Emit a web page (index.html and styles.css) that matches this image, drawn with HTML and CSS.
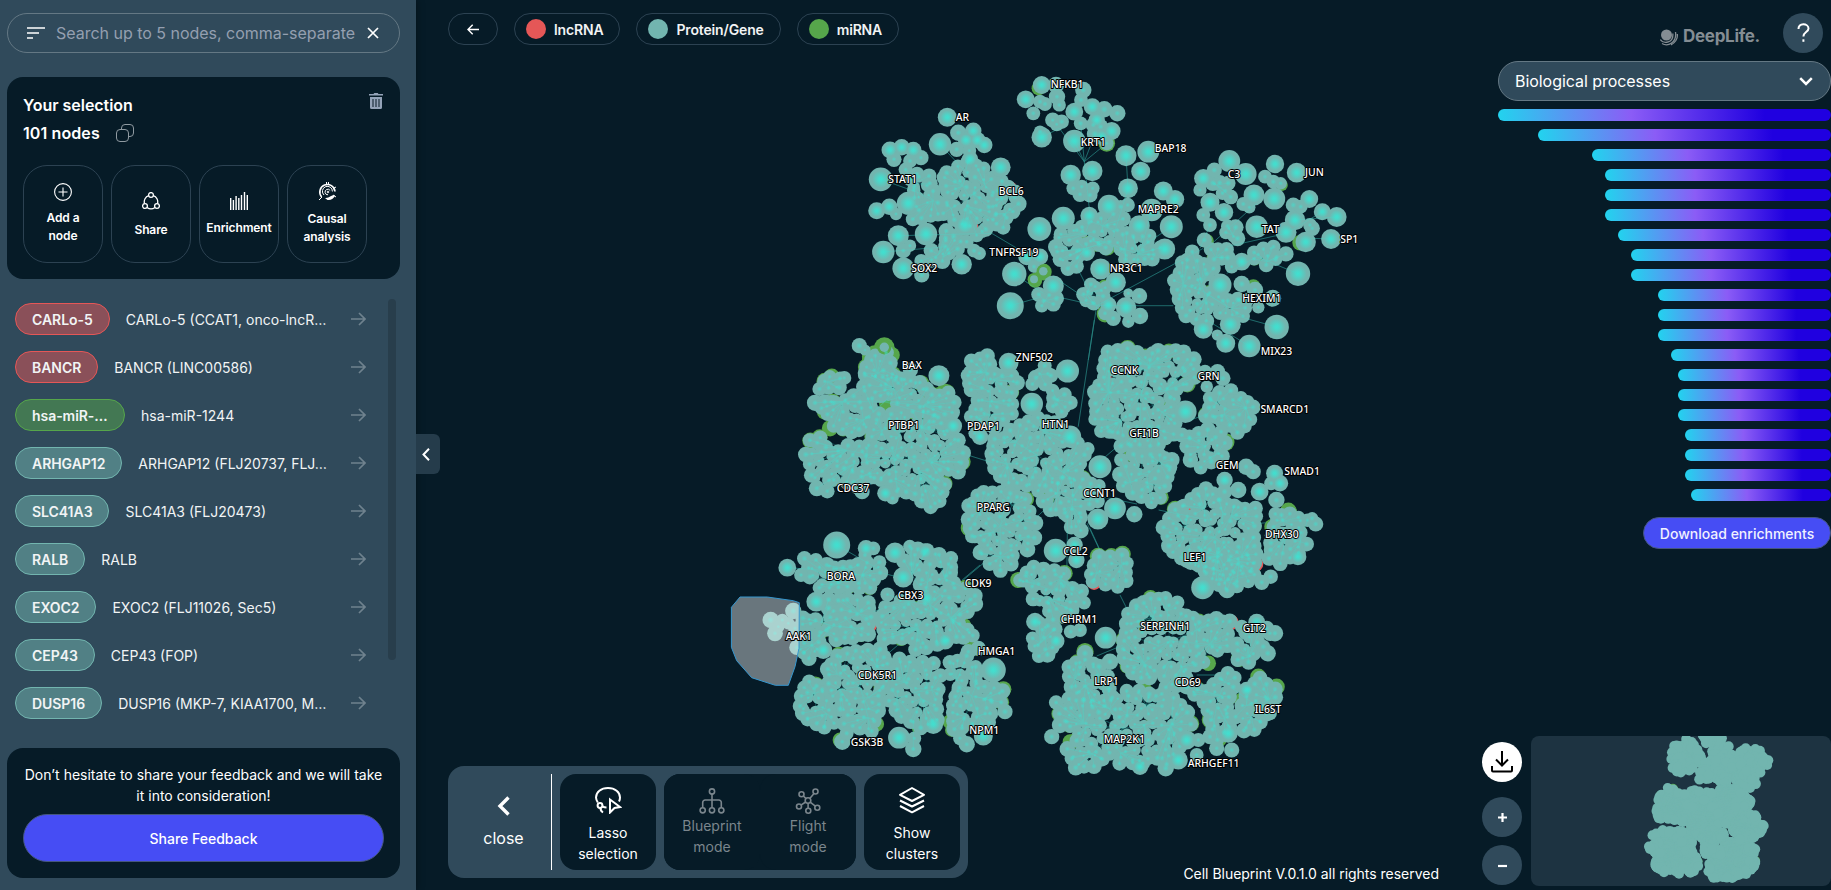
FILE: index.html
```html
<!DOCTYPE html>
<html lang="en">
<head>
<meta charset="utf-8">
<title>Cell Blueprint</title>
<link rel="stylesheet" href="styles.css">
</head>
<body>
<svg class="graph" id="graph" viewBox="0 0 1831 890" width="1831" height="890">
  <defs>
    <radialGradient id="core">
      <stop offset="0" stop-color="#40e0d0"/>
      <stop offset=".25" stop-color="#40e0d0" stop-opacity=".85"/>
      <stop offset="1" stop-color="#40e0d0" stop-opacity="0"/>
    </radialGradient>
  </defs>
</svg>

<div class="app">
  <aside class="sidebar">
    <div class="search">
      <svg class="ic-filter" width="18" height="12" viewBox="0 0 18 12" stroke="#fff" stroke-width="1.3"><path d="M0 1h18M0 6h12M0 11h6"/></svg>
      <span class="search-text">Search up to 5 nodes, comma-separate</span>
      <svg width="12" height="12" viewBox="0 0 12 12" stroke="#fff" stroke-width="1.7"><path d="M1 1l10 10M11 1L1 11"/></svg>
    </div>

    <section class="card selection">
      <div class="sel-head">
        <div>
          <h2>Your selection</h2>
          <div class="count"><h2>101 nodes</h2>
            <svg width="18" height="18" viewBox="0 0 18 18" fill="none" stroke="#8f9aa1"><rect x=".5" y="5.500" width="12" height="12" rx="3.500"/><path d="M5.500 5.500V4a3.500 3.500 0 0 1 3.500-3.500h5A3.500 3.500 0 0 1 17.500 4v5a3.500 3.500 0 0 1-3.500 3.500h-1.500"/></svg>
          </div>
        </div>
        <svg class="trash" width="14" height="16" viewBox="0 0 14 16" fill="#94a3b8"><path d="M0 1h4.500l.8-1h3.400l.8 1H14v1.600H0z"/><path fill-rule="evenodd" d="M1 4h12v10.500a1.500 1.500 0 0 1-1.500 1.500h-9A1.500 1.500 0 0 1 1 14.500zM3.500 6v8h1V6zM6.500 6v8h1V6zM9.500 6v8h1V6z"/></svg>
      </div>
      <div class="actions">
        <button class="action"><svg width="18" height="18" viewBox="0 0 18 18" fill="none" stroke="#fff" stroke-width="1.100"><circle cx="9" cy="9" r="8.400"/><path d="M9 4.500v9M4.500 9h9"/></svg><span>Add a<br>node</span></button>
        <button class="action share"><svg width="18" height="18" viewBox="0 0 18 18" fill="none" stroke="#fff" stroke-width="1.300"><circle cx="9" cy="3" r="2.400"/><circle cx="3" cy="14" r="2.400"/><circle cx="15" cy="14" r="2.400"/><path d="M6.700 3.600A6.500 6.500 0 0 0 2.500 11.500M11.300 3.600a6.500 6.500 0 0 1 4.200 7.900M5 15.500a7 7 0 0 0 8 0"/></svg><span>Share</span></button>
        <button class="action enrich"><svg width="18" height="18" viewBox="0 0 18 18" stroke="#fff" stroke-width="1.400"><path d="M.7 18V6M3.400 18V8M6.100 18V4M8.800 18V6M11.500 18V3M14.500 18V0M17.300 18V3"/></svg><span>Enrichment</span></button>
        <button class="action causal"><svg width="19" height="19" viewBox="0 0 19 19" fill="none" stroke="#fff" stroke-width="1"><path d="M3.600 15A7.600 7.600 0 1 1 17 9.500" stroke-width="1.600"/><path d="M6 13a5 5 0 1 1 8.400-3.500M10 12.800a2.800 2.800 0 1 1 2.200-4.300M8.500 0v2M10.500 0v2M1 18l3-3M16 6l2-1M15 13l3 2"/><circle cx="10" cy="10" r=".8"/><path d="M7 16c5 .5 6-3.500 10-2.500-1 3-4 5-7.500 4.500z" fill="#fff" stroke="none"/></svg><span>Causal<br>analysis</span></button>
      </div>
    </section>

    <div class="list">
      <ul class="rows" id="rows"></ul>
      <div class="scrollbar"></div>
    </div>

    <section class="card feedback">
      <p>Don’t hesitate to share your feedback and we will take it into consideration!</p>
      <button class="primary">Share Feedback</button>
    </section>
    <button class="collapse"><svg width="8" height="13" viewBox="0 0 8 13" fill="none" stroke="#fff" stroke-width="2"><path d="M7 .8L1.500 6.500 7 12.200"/></svg></button>
  </aside>

  <main class="stage">
    <div class="left-col">
      <div class="legend">
        <button class="chip back"><svg width="12" height="11" viewBox="0 0 12 11" fill="none" stroke="#fff" stroke-width="1.400"><path d="M12 5.500H1M5.700.8L1 5.500l4.700 4.700"/></svg></button>
        <div class="chip"><i class="dot red"></i>lncRNA</div>
        <div class="chip"><i class="dot teal"></i>Protein/Gene</div>
        <div class="chip"><i class="dot green"></i>miRNA</div>
      </div>
      <div class="bottom">
        <div class="toolbar">
          <div class="close"><svg width="13" height="20" viewBox="0 0 13 20" fill="none" stroke="#fff" stroke-width="3.400"><path d="M11.500 1.500L3 10l8.500 8.500"/></svg><span>close</span></div>
          <div class="tool"><svg width="28" height="28" viewBox="0 0 28 28" fill="none" stroke="#fff" stroke-width="2"><path d="M3.800 16.500A10.500 10 0 0 1 2 11.500C2 6 7 2 14 2s12 4 12 9.500c0 1.500-.3 2.700-1 4"/><circle cx="6" cy="19.500" r="2.400"/><path d="M6.500 22c0 2 .8 3.500 2.500 4.500M8.500 20.500c1.500.8 2.500 1 4 1M16 13.500l10 7.500-5.500 1-4.500 4.500z"/></svg><span>Lasso<br>selection</span></div>
          <div class="tool-group">
            <div class="tool off"><svg width="26" height="26" viewBox="0 0 26 26" fill="none" stroke="#7b868d" stroke-width="1.600"><circle cx="13" cy="3.500" r="2.600"/><circle cx="3.700" cy="22.300" r="2.600"/><circle cx="13" cy="22.300" r="2.600"/><circle cx="22.300" cy="22.300" r="2.600"/><path d="M13 6v13.600M3.700 19.600V14.500a2.500 2.500 0 0 1 2.500-2.500h13.600a2.500 2.500 0 0 1 2.500 2.500v5.100"/></svg><span>Blueprint<br>mode</span></div>
            <div class="tool off"><svg width="26" height="26" viewBox="0 0 26 26" fill="none" stroke="#7b868d" stroke-width="1.600"><circle cx="13" cy="12.500" r="2.800"/><circle cx="6.500" cy="6.200" r="2.500"/><circle cx="20.500" cy="3.500" r="2.500"/><circle cx="4" cy="18.500" r="2.500"/><circle cx="13.300" cy="22.700" r="2.500"/><circle cx="22.300" cy="19.800" r="2.500"/><path d="M8.300 8l2.800 2.600M19 5.500l-4.200 5M10.600 14L6 17.200M13.100 15.300v4.900M15.200 14.200l5.100 4"/></svg><span>Flight<br>mode</span></div>
          </div>
          <div class="tool"><svg width="28" height="28" viewBox="0 0 28 28" fill="none" stroke="#fff" stroke-width="2" stroke-linejoin="round"><path d="M14 2l12 6.800-12 6.200L2 8.800z"/><path d="M2 14.500l12 6 12-6M2 20l12 6.300L26 20"/></svg><span>Show<br>clusters</span></div>
        </div>
        <div class="rights">Cell Blueprint V.0.1.0 all rights reserved</div>
      </div>
    </div>

    <div class="right-col">
      <div class="brand">
        <div class="logo"><svg width="19" height="17" viewBox="0 0 19 17" fill="none" stroke="#848d93" stroke-width="1.300"><circle cx="6.500" cy="6" r="5.500" fill="#848d93" stroke="none"/><path d="M.3 10.500c3.500 5 13.500 3.500 12.500-6M2 14.500c6 3.500 15-1 13.500-11.500M11 15.800c4-1.800 7-6 6.300-10.800"/></svg><span>DeepLife.</span></div>
        <button class="help"><svg width="13" height="20" viewBox="0 0 13 20" fill="none" stroke="#fff" stroke-width="2"><path d="M1.500 6C1.300 3 3.500 1.200 6.300 1.200S11.500 3 11.500 5.500c0 3.500-5.100 3.800-5.100 8"/><path d="M6.400 16.300v2.500"/></svg></button>
      </div>
      <div class="enrichment">
        <div class="select">Biological processes<svg width="14" height="9" viewBox="0 0 14 9" fill="none" stroke="#fff" stroke-width="2.500"><path d="M1.200 1.200L7 7l5.800-5.800"/></svg></div>
        <div class="bars" id="bars"></div>
        <button class="primary download">Download enrichments</button>
      </div>
      <div class="nav">
        <div class="zoom">
          <button class="round white"><svg width="22" height="22" viewBox="0 0 22 22" fill="none" stroke="#000" stroke-width="2"><path d="M11 0v14M5 8.500l6 6 6-6M1 15v4.500a1 1 0 0 0 1 1h18a1 1 0 0 0 1-1V15"/></svg></button>
          <button class="round"><svg width="9" height="9" viewBox="0 0 9 9" stroke="#fff" stroke-width="2.200"><path d="M4.500 0v9M0 4.500h9"/></svg></button>
          <button class="round"><svg width="9" height="9" viewBox="0 0 9 9" stroke="#fff" stroke-width="2.200"><path d="M0 5h9"/></svg></button>
        </div>
        <svg class="minimap" id="minimap" width="300" height="150" viewBox="0 0 300 150"></svg>
      </div>
    </div>
  </main>
</div>
<script src="graph.js"></script>
</body>
</html>
```
FILE: styles.css
```css
* { box-sizing: border-box; }
body {
  margin: 0;
  width: 1831px;
  height: 890px;
  overflow: hidden;
  background: #061b27;
  color: #fff;
  font-family: Inter, "Liberation Sans", sans-serif;
  font-size: 14px;
}
button { font: inherit; color: inherit; background: none; border: 0; padding: 0; }
h2, p, ul { margin: 0; padding: 0; }
svg { display: block; flex: none; }

.graph { position: absolute; left: 0; top: 0; }
.graph .label {
  font: 500 10.4px "Noto Sans", "Open Sans", sans-serif;
  fill: #fff;
  stroke: #000;
  stroke-width: 2px;
  stroke-linejoin: round;
  paint-order: stroke;
}
.app { position: relative; display: flex; height: 890px; }

.sidebar {
  position: relative;
  width: 416px;
  flex: none;
  padding: 13px 16px 12px 7px;
  background: #304a5b;
  box-shadow: 0 0 8px rgba(0, 0, 0, .4);
  display: flex;
  flex-direction: column;
}
.search {
  height: 40px;
  border: 1px solid #647884;
  border-radius: 20px;
  display: flex;
  align-items: center;
  padding: 0 20px 0 19px;
  font-size: 16px;
  letter-spacing: -.02px;
  color: #949fb0;
}
.search-text { margin-left: 11px; flex: 1; white-space: nowrap; }
.card { background: #061b27; border-radius: 16px; width: 393px; padding: 16px; }
.selection { margin-top: 24px; height: 202px; }
.sel-head { display: flex; justify-content: space-between; }
.sel-head h2 { font-size: 16px; font-weight: 600; line-height: 24px; letter-spacing: -.04px; }
.count { display: flex; align-items: center; gap: 15px; margin-top: 4px; }
.count h2 { letter-spacing: .1px; }
.count svg { margin-left: 1px; }
.trash { margin-right: 1px; }
.actions { display: flex; gap: 8px; margin-top: 20px; }
.action {
  width: 80px;
  height: 98px;
  border: 1px solid #2c4252;
  border-radius: 24px;
  display: flex;
  flex-direction: column;
  align-items: center;
  padding-top: 17px;
  gap: 8px;
  font-size: 12px;
  font-weight: 600;
  letter-spacing: -.1px;
  line-height: 18px;
}
.share { padding-top: 26px; gap: 11px; }
.enrich { padding-top: 26px; gap: 9px; }
.causal { padding-top: 16px; gap: 9px; }

.list { display: flex; justify-content: space-between; padding: 24px 4px 0 8px; height: 469px; }
.rows { list-style: none; width: 351px; display: flex; flex-direction: column; gap: 16px; }
.row { height: 32px; display: flex; align-items: center; color: #f1f4f5; white-space: nowrap; }
.pill {
  flex: none;
  height: 32px;
  line-height: 31px;
  border: 1px solid #72b5af;
  background: #518085;
  border-radius: 16px;
  padding: 0 16px;
  font-weight: 600;
  letter-spacing: -.05px;
  margin-right: 16px;
}
.pill.lnc { border-color: #e55757; background: #8a5059; }
.pill.mir { border-color: #56a64b; background: #437853; width: 110px; }
.row svg { margin-left: auto; }
.scrollbar { width: 8px; height: 361px; margin-top: -4px; border-radius: 4px; background: #283e4c; }

.feedback { height: 130px; text-align: center; line-height: 21px; padding-top: 16px; }
.primary { background: #464df4; border: 1px solid #45567e; border-radius: 24px; font-weight: 500; }
.feedback .primary { width: 361px; height: 48px; margin-top: 8px; }
.collapse {
  position: absolute;
  left: 416px;
  top: 434px;
  width: 24px;
  height: 40px;
  background: #253c4b;
  border-radius: 0 6px 6px 0;
  display: flex;
  align-items: center;
  justify-content: center;
  padding-right: 4px;
}

.stage { flex: 1; display: flex; justify-content: space-between; padding: 13px 0 4px 32px; }
.left-col { display: flex; flex-direction: column; justify-content: space-between; width: 991px; padding-bottom: 8px; }
.legend { display: flex; gap: 16px; }
.chip {
  height: 32px;
  border: 1px solid #2c4252;
  border-radius: 16px;
  display: flex;
  align-items: center;
  padding: 0 16px 0 11px;
  font-weight: 600;
  letter-spacing: -.15px;
  color: #f1f3f4;
}
.back { width: 50px; padding: 0; justify-content: center; }
.dot { width: 20px; height: 20px; border-radius: 50%; margin-right: 8px; }
.red { background: #e55757; }
.teal { background: #72b5af; }
.green { background: #56a64b; }

.bottom { display: flex; justify-content: space-between; align-items: flex-end; }
.toolbar {
  width: 520px;
  height: 112px;
  padding: 8px;
  display: flex;
  gap: 8px;
  background: #304a5b;
  border-radius: 16px;
}
.close {
  width: 96px;
  border-right: 1px solid #fff;
  display: flex;
  flex-direction: column;
  align-items: center;
  padding-top: 22px;
  gap: 12px;
  font-size: 16px;
  line-height: 20px;
}
.tool {
  width: 96px;
  height: 96px;
  background: #061b27;
  border-radius: 16px;
  display: flex;
  flex-direction: column;
  align-items: center;
  text-align: center;
  line-height: 21px;
  padding-top: 12px;
  gap: 8px;
}
.tool-group { display: flex; background: #061b27; border-radius: 16px; }
.off { color: #7b868d; padding-top: 14px; gap: 1px; }
.rights { line-height: 17px; margin-bottom: -4px; letter-spacing: -.02px; }

.right-col { width: 349px; display: flex; flex-direction: column; }
.brand { display: flex; justify-content: flex-end; gap: 23px; padding-right: 8px; height: 48px; }
.logo { display: flex; gap: 4px; padding-top: 16px; }
.logo span { font-size: 17px; font-weight: 700; line-height: 14px; letter-spacing: -.3px; color: #848d93; }
.help { width: 40px; height: 40px; border-radius: 50%; background: #304a5b; display: flex; justify-content: center; }
.help svg { margin-top: 10px; }
.enrichment { margin-left: 16px; display: flex; flex-direction: column; align-items: flex-end; }
.select {
  width: 333px;
  height: 40px;
  border: 1px solid #647884;
  border-radius: 20px;
  background: #304a5b;
  font-size: 16px;
  letter-spacing: -.05px;
  display: flex;
  align-items: center;
  justify-content: space-between;
  padding: 0 17px 0 16px;
}
.bars { width: 333px; margin-top: 8px; display: flex; flex-direction: column; align-items: flex-end; gap: 8px; }
.bar { height: 12px; border-radius: 6px; background: linear-gradient(90deg, #22d3ee, #8b5cf6 40%, #2000e0 80%); }
.download { width: 188px; height: 32px; margin-top: 16px; color: #f0f1ff; }
.nav { margin-top: auto; display: flex; align-items: flex-end; justify-content: space-between; }
.zoom { display: flex; flex-direction: column; gap: 8px; padding-bottom: 1px; }
.round { width: 40px; height: 40px; border-radius: 50%; background: #304a5b; display: flex; align-items: center; justify-content: center; }
.round.white { background: #fff; margin-bottom: 7px; }
.minimap { background: #1d3341; border-radius: 8px; }
```
FILE: graph.js
```js
const NS = 'http://www.w3.org/2000/svg';
const TEAL = '#72b5af', GREEN = '#56a64b', RED = '#e55757';

let seed = 7;
function rnd() {
  seed = (seed * 1664525 + 1013904223) % 4294967296;
  return seed / 4294967296;
}

// Each sector has its own local grid: origin, scale, single nodes (x,y,r), clusters and labels.
const sectors = [
  { o: [860, 60], s: [3, 3],
    nodes: '545,75,26 588,75,22 670,90,24 497,118,26 591,110,24 540,125,18 555,132,18 520,160,18 598,135,17 643,155,26 663,120,18 697,140,25 733,148,24 772,160,24 578,180,20 605,185,19 590,193,18 662,190,18 710,180,22 700,195,20 722,200,20 755,213,26 545,232,30 540,215,16 643,243,33 705,222,24 725,230,22 740,250,18 262,172,28 240,253,33 295,218,24 340,212,22 318,240,22 352,240,22 373,255,22 290,268,20 328,272,18 330,298,22 90,270,25 125,262,22 160,270,22 183,293,20 102,298,20 150,303,18 62,358,35 50,452,25 88,440,22 108,462,16 145,430,34 422,322,29 315,495,32 115,527,31 198,522,33 70,576,33 130,625,32 185,645,20 305,613,30 150,557,16 130,572,20 320,545,18 342,572,18 358,580,17 632,345,30 697,333,30 640,385,18 660,403,20 690,405,20 698,385,18 665,380,18 798,287,31 865,275,32 842,334,28 804,385,29 803,435,19 782,440,17 910,393,28 945,418,27 747,438,33 610,475,34 538,507,35 688,467,26 875,450,33 838,497,31 934,500,34 914,567,31 680,578,22 500,590,25 540,590,22 522,620,16 463,642,36 580,678,31 451,737,40 722,627,31 767,667,30 745,735,22 735,760,18 760,775,20 798,742,30 838,708,23 805,700,12 840,768,24 805,785,16 1108,303,32 1157,342,32 1030,355,27 1063,330,20 1245,312,27 1310,338,29 1215,350,18 1240,365,18 1262,370,16 1050,427,28 1092,457,27 1182,405,31 1243,416,32 1020,390,17 1030,465,18 1050,495,18 1150,432,18 1168,442,16 1190,500,33 1278,517,31 1305,480,30 1348,417,26 1300,435,20 1322,440,18 1387,455,25 1430,471,29 1413,537,29 1337,546,30 1357,505,20 1033,540,20 1314,641,36 1250,801,36 1168,858,33 1111,793,31 1097,850,28 1080,675,34 1145,605,26 1145,672,24 1185,690,24 1238,715,25 1195,742,16 1030,808,28 1072,825,14 1115,620,18 1350,495,18',
    green: '536,85,17 740,250,21 550,636,21 525,662,17 735,762,21 1265,375,14 1040,543,17 1320,548,19 705,555,16 1180,680,18 73,862,26 95,885,20 30,890,20',
    rim: '550,634,13 522,658,12',
    clusters: [
      '262,335 320,305 372,325 395,360 400,400 390,440 400,480 380,505 350,528 330,500 280,480 250,460 265,400 255,355',
      '425,365 465,395 472,435 440,475 428,500 410,490 400,440', '140,330 205,350 220,395 235,430 235,465 155,475 170,440 160,390',
      '260,510 300,545 290,565 245,600 185,600 215,575 255,560',
      '585,560 600,525 640,510 665,500 690,485 760,465 790,480 775,510 820,530 870,530 900,560 880,595 830,600 800,600 780,570 740,565 700,540 655,570 650,620 620,625 600,600',
      '540,700 545,740 580,735 590,715', '695,675 735,685 730,710 700,730 680,725 672,705',
      '1060,370 1105,370 1112,408 1085,400', '1100,500 1130,500 1130,535 1100,520',
      '995,575 1010,605 1060,625 1020,655 995,675 1050,700 1100,720 1160,720 1150,770 1080,760 1040,780 975,770 955,720 945,665 970,610',
      '1050,570 1100,570 1105,590 1060,595', '1185,575 1240,562 1275,580 1220,612 1180,595'],
    labels: 'NFKB1,572,73 AR,287,172 KRT1,662,247 BAP18,884,265 C3,1103,343 JUN,1335,337 STAT1,85,357 BCL6,416,393 MAPRE2,833,447 TNFRSF19,388,577 SOX2,154,625 NR3C1,749,625 TAT,1206,507 SP1,1441,538 HEXIM1,1147,715 MIX23,1202,873',
    edges: '395,520,530,600 580,650,710,737 710,737,1030,565 710,737,940,737 710,737,685,900 463,642,550,700 451,737,540,712 590,710,710,737 650,620,710,737 1040,565,1190,430 1100,560,1280,520 1357,535,1413,537 1100,640,1190,590 1190,590,1314,641 1120,765,1250,801 1040,780,1168,858 240,253,330,350 70,576,260,560 115,527,395,520 62,358,180,400 643,243,673,305 705,222,673,305 598,205,673,305 662,190,673,305 740,250,673,305 545,232,598,205 673,305,690,467 798,287,804,385 804,385,760,530 875,450,845,560 934,500,845,560 1050,495,1020,565 1305,480,1430,471 1280,520,1387,455' },
  { o: [780, 320], s: [2.8, 3],
    nodes: '222,77,20 238,90,14 365,150,20 445,167,31 485,318,26 230,515,20 295,520,22 315,535,16 640,128,29 805,153,34 705,252,33 560,350,22 545,340,16 812,350,33 896,440,34 938,565,32 890,597,31 992,583,24 1135,275,33 1225,155,20 1240,175,20 1195,200,16 1190,155,18 772,692,35 825,675,22 830,720,22 1245,480,22 1245,515,20 1283,510,24 1343,515,26 1305,440,24 1325,455,20 1385,460,25 1400,490,22 1390,540,24 1235,335,18 1125,345,20 1450,710,25 1500,612,20 1490,595,16 1375,490,18',
    green: '292,88,23 265,100,20 250,122,18 145,170,20 125,275,19 140,325,20 85,362,20 300,250,20 395,190,20 460,215,20 1425,575,20 1380,625,20 750,535,16',
    rim: '292,82,14', gr: .16,
    clusters: [
      '265,105 300,95 310,130 290,150 345,180 300,180 235,160 255,120', '140,170 180,172 165,205 110,205',
      '240,165 290,170 390,190 425,225 470,220 490,250 485,275 440,290 390,260 330,250 300,220 260,235 240,320 200,335 150,320 135,280 100,250 150,245 210,230 235,200',
      '275,285 310,280 400,275 430,290 470,330 500,360 510,400 500,455 450,450 420,470 460,495 450,540 420,560 380,525 330,510 310,480 230,470 220,500 185,485 200,455 160,440 150,480 130,510 100,505 85,465 75,400 85,360 110,350 130,385 165,395 190,375 250,375 260,330',
      '535,125 580,108 585,130 560,155 600,165 650,170 662,190 650,220 650,280 600,320 560,300 535,290 555,240 535,210 530,165',
      '715,170 740,140 755,165 740,195 705,190', '765,210 800,220 812,250 790,275 765,260',
      '625,350 670,315 720,295 770,305 810,355 860,385 840,430 825,480 790,470 740,500 720,515 690,495 640,485 600,445 590,400 600,360',
      '790,470 850,480 895,500 890,540 840,560 845,630 815,620 800,580 760,570 740,545 760,510',
      '915,95 975,85 1020,110 1060,95 1130,92 1160,120 1160,170 1110,210 1095,260 1105,310 1100,340 1060,375 1010,375 955,375 945,340 900,330 885,295 885,250 880,215 905,170',
      '1205,235 1260,210 1290,230 1325,265 1320,300 1280,335 1240,300 1195,290', '1145,350 1200,330 1245,370 1235,410 1180,440 1150,420 1140,380',
      '955,420 990,405 1060,405 1100,420 1085,470 1065,530 1040,550 1010,530 960,500 955,460',
      '550,525 620,515 690,535 700,570 715,610 710,650 690,685 650,680 650,730 620,750 590,730 560,700 570,660 535,650 525,600 530,560',
      '1150,535 1195,505 1230,540 1270,560 1330,565 1335,590 1325,650 1330,700 1310,780 1250,810 1170,740 1100,700 1090,680 1075,620 1105,570',
      '1390,585 1430,580 1475,600 1460,640 1475,675 1450,695 1400,730 1370,715 1375,670 1380,620'],
    labels: 'BAX,341,136 ZNF502,660,111 CCNK,926,151 GRN,1169,168 SMARCD1,1345,268 PTBP1,303,316 PDAP1,524,318 HTN1,733,313 GFI1B,978,340 CDC37,159,504 PPARG,551,562 CCNT1,849,520 GEM,1220,436 SMAD1,1412,454 DHX30,1358,643 LEF1,1130,711 CCL2,793,694',
    edges: '880,0,835,320 525,405,600,430 895,425,960,365 720,590,760,550 860,610,895,690 560,735,510,780 805,600,803,760 1060,570,1200,600 900,530,1000,552 1095,360,1200,350 1150,300,1200,280' },
  { o: [720, 520], s: [3, 3],
    nodes: '350,75,40 202,143,26 243,165,18 525,98,30 289,245,29 550,172,30 438,85,22 460,85,18 435,105,17 152,300,24 187,300,16 165,340,23 220,273,24 205,310,16 225,325,18 310,390,26 820,450,37 537,653,32 583,655,18 580,687,24 640,612,29 367,665,24 740,673,24 790,648,28 620,235,26 615,95,25 675,362,26 380,640,18 720,655,18 745,395,20 775,385,20 855,575,20 175,320,16',
    green: '730,318,20 850,508,20 755,385,20 690,605,18 470,612,18 695,630,16 360,660,18 367,232,18', rim: '', gr: .09,
    clusters: [
      '255,112 290,118 345,145 390,143 440,125 480,125 480,160 450,200 380,203 300,200 270,170',
      '570,82 620,92 690,115 690,160 700,190 765,225 765,250 740,275 700,300 740,325 755,345 710,350 650,375 590,390 575,355 490,355 485,310 495,260 505,225 540,240 590,265 640,240 600,190 600,150 550,120',
      '325,240 380,240 445,245 450,290 445,340 400,350 350,355 320,330 290,300 250,292 245,340 232,380 265,412 290,390 300,340 330,320',
      '350,410 410,390 480,390 505,430 500,480 475,530 475,575 455,635 420,625 370,610 365,570 390,555 340,530 325,490 320,450',
      '250,500 270,488 310,510 325,570 345,610 315,622 260,600 240,555', '540,420 640,430 660,470 650,540 650,600 600,620 545,590 510,545 520,480',
      '690,430 740,410 770,440 770,490 850,515 845,545 790,540 810,580 810,605 700,630 695,580 705,530 715,500 690,465'],
    labels: 'BORA,320,168 CBX3,533,225 CDK9,734,189 AAK1,197,349 HMGA1,773,393 CDK5R1,413,465 NPM1,748,630 GSK3B,392,666',
    edges: '350,75,480,150 490,160,530,170 730,180,790,130 460,275,490,265 505,400,540,370 580,687,580,600 202,143,300,150 640,260,670,230' },
  { o: [1000, 500], s: [3, 3],
    nodes: '608,263,34 785,247,20 812,230,19 317,413,32 255,460,24 330,485,24 105,365,26 168,423,25 240,390,18 212,395,18 770,367,25 800,385,20 825,400,24 803,460,24 790,440,18 725,380,18 630,710,20 650,745,20 695,750,20 595,720,18 497,805,24 535,780,28 685,700,28 740,570,22 560,720,28 590,765,18 420,800,22 810,640,18 155,710,20 180,675,24 810,400,20',
    green: '55,240,20 255,455,22 775,530,20 830,560,20 435,570,18 500,440,17 210,725,18 725,600,18 625,490,19 455,650,16 865,32,20', rim: '', gr: .1,
    clusters: [
      '60,240 100,200 195,220 190,260 245,270 250,310 215,335 160,360 140,310 100,300 95,260', '270,220 300,172 365,168 378,190 376,240 350,262 320,255 280,245',
      '115,365 165,385 170,420 145,465 115,465 97,415 130,390', '560,180 640,210 680,263 700,250 700,215 760,225 765,190 740,160 600,150',
      '385,340 410,320 455,295 500,292 535,310 555,345 600,370 650,357 690,360 685,400 680,435 655,455 620,420 590,440 610,485 560,510 555,560 500,560 490,500 465,510 450,535 420,535 380,500 370,450 375,400',
      '735,400 780,390 775,430 745,485 712,478 712,430', '205,500 255,480 300,500 320,530 335,600 300,640 250,600 215,560',
      '165,610 205,600 250,600 310,600 340,590 380,570 450,580 520,590 560,640 570,670 520,700 540,740 500,790 470,770 430,790 360,790 330,760 280,800 230,800 205,750 230,720 210,680 180,640',
      '560,560 620,575 680,520 705,530 690,590 680,620 690,680 650,720 630,660 610,610', '745,570 780,535 825,565 825,590 770,600 800,640 760,690 730,690 710,650 730,615'],
    labels: 'CHRM1,182,357 SERPINH1,421,378 GIT2,728,384 LRP1,283,543 CD69,524,546 IL6ST,764,628 MAP2K1,311,717 ARHGEF11,563,790',
    edges: '360,285,380,325 270,85,300,150 290,468,370,435 590,525,650,525 690,560,800,640 780,70,800,68' }
];

const quads = t => t ? t.split(' ').map(v => v.split(',').map(Number)) : [];
function inside(x, y, poly) {
  let hit = false;
  for (let i = 0, j = poly.length - 1; i < poly.length; j = i++) {
    const [xi, yi] = poly[i], [xj, yj] = poly[j];
    if ((yi > y) !== (yj > y) && x < (xj - xi) * (y - yi) / (yj - yi) + xi) hit = !hit;
  }
  return hit;
}

const nodes = [], under = [], rims = [], links = [], strong = [], labels = [];

function fillCluster(poly, greenRate) {
  const own = [];
  const add = (x, y, edge) => {
    const r = edge ? 6.6 + rnd() * 1.5 : 5.4 + rnd() * 1.6;
    own.push([x, y, r]);
    if (edge && rnd() < greenRate) under.push([x + rnd() * 3 - 1.5, y - 1 + rnd(), r + .8, GREEN]);
    else if (edge && rnd() < .015) under.push([x + 1.2, y + 1.2, r, RED]);
  };
  poly.forEach(([x1, y1], i) => {
    const [x2, y2] = poly[(i + 1) % poly.length];
    const len = Math.hypot(x2 - x1, y2 - y1), n = Math.max(1, Math.round(len / 10));
    for (let k = 0; k < n; k++) add(x1 + (x2 - x1) * k / n + rnd() * 2.4 - 1.2, y1 + (y2 - y1) * k / n + rnd() * 2.4 - 1.2, true);
  });
  const xs = poly.map(p => p[0]), ys = poly.map(p => p[1]);
  const [x0, x1, y0, y1] = [Math.min(...xs), Math.max(...xs), Math.min(...ys), Math.max(...ys)];
  let odd = 0;
  for (let y = y0; y < y1; y += 8.5, odd ^= 1)
    for (let x = x0 + odd * 4.8; x < x1; x += 9.6) {
      const px = x + rnd() * 6 - 3, py = y + rnd() * 6 - 3;
      if (inside(px, py, poly)) add(px, py, false);
    }
  // Fan links: leaves attach to the nearest local hub, hubs attach to the cluster centre.
  const cx = own.reduce((a, n) => a + n[0], 0) / own.length, cy = own.reduce((a, n) => a + n[1], 0) / own.length;
  const hubs = own.filter((n, i) => i % 9 === 5).map(n => [n[0] + (cx - n[0]) * .3, n[1] + (cy - n[1]) * .3]);
  if (!hubs.length) hubs.push([cx, cy]);
  own.forEach(n => {
    const h = hubs.reduce((b, c) => Math.hypot(c[0] - n[0], c[1] - n[1]) < Math.hypot(b[0] - n[0], b[1] - n[1]) ? c : b);
    links.push([n[0], n[1], h[0], h[1]]);
    nodes.push(n);
  });
  hubs.forEach(h => links.push([h[0], h[1], cx, cy]));
}

sectors.forEach(({ o, s, nodes: list, green, rim, gr = .04, clusters, labels: names, edges }) => {
  const X = x => o[0] + x / s[0], Y = y => o[1] + y / s[1];
  clusters.forEach(c => fillCluster(quads(c).map(([x, y]) => [X(x), Y(y)]), gr));
  quads(list).forEach(([x, y, r]) => nodes.push([X(x), Y(y), r / 3 + (r < 23 ? .9 : .2)]));
  quads(green).forEach(([x, y, r]) => under.push([X(x), Y(y), r / 3 + 1.4, GREEN]));
  quads(rim).forEach(([x, y, r]) => rims.push([X(x), Y(y), r / 3]));
  quads(edges).forEach(([a, b, c, d]) => strong.push([X(a), Y(b), X(c), Y(d)]));
  names.split(' ').forEach(v => { const [t, x, y] = v.split(','); labels.push([t, X(+x), Y(+y)]); });
});

function el(parent, tag, attrs, text) {
  const e = document.createElementNS(NS, tag);
  for (const k in attrs) e.setAttribute(k, attrs[k]);
  if (text) e.textContent = text;
  return parent.appendChild(e);
}
const f = n => n.toFixed(1);
const path = list => list.map(l => `M${f(l[0])} ${f(l[1])}L${f(l[2])} ${f(l[3])}`).join('');

const g = document.getElementById('graph');
el(g, 'path', { d: path(strong), stroke: '#2f8f8b', 'stroke-width': .7, opacity: .5 });
under.forEach(([x, y, r, c]) => el(g, 'circle', { cx: f(x), cy: f(y), r: f(r), fill: c }));
nodes.forEach(([x, y, r]) => el(g, 'circle', { cx: f(x), cy: f(y), r: f(r), fill: TEAL }));
rims.forEach(([x, y, r]) => {
  el(g, 'circle', { cx: f(x), cy: f(y), r: f(r + 2.4), fill: GREEN });
  el(g, 'circle', { cx: f(x), cy: f(y), r: f(r), fill: TEAL });
});
el(g, 'path', { d: path(strong.concat(links)), stroke: '#40e0d0', 'stroke-width': .6, opacity: .4 });
nodes.forEach(([x, y, r]) => {
  const big = r > 8.2;
  el(g, 'circle', { cx: f(x), cy: f(y), r: f(r * (big ? .72 : .3 + rnd() * .15)), fill: 'url(#core)', opacity: big ? 1 : .6 });
});
el(g, 'path', { d: 'M740 597h27.300l26 3.700 6 2-.3 45.600-4 18.400-6.700 18.600h-13l-23.600-7.600-15-17-5.300-13.400v-40z', fill: '#fff', 'fill-opacity': .4, stroke: '#3597cf', 'stroke-width': 1 });
labels.forEach(([t, x, y]) => el(g, 'text', { class: 'label', x: f(x), y: f(y + 3.8) }, t));

const mini = document.getElementById('minimap');
const mm = (x, y, r, fill) => el(mini, 'circle', { cx: f(120.500 + (x - 783) * .211), cy: f(142 + (y - 768) * .2136), r, fill });
under.forEach(([x, y, r, c]) => { if (c === GREEN) mm(x, y, 4.4, c); });
nodes.forEach(([x, y, r]) => mm(x, y, f(4.2 + r * .08), TEAL));

const rows = [
  ['lnc', 'CARLo-5', 'CARLo-5 (CCAT1, onco-lncR…'], ['lnc', 'BANCR', 'BANCR (LINC00586)'], ['mir', 'hsa-miR-…', 'hsa-miR-1244'],
  ['', 'ARHGAP12', 'ARHGAP12 (FLJ20737, FLJ…'], ['', 'SLC41A3', 'SLC41A3 (FLJ20473)'], ['', 'RALB', 'RALB'],
  ['', 'EXOC2', 'EXOC2 (FLJ11026, Sec5)'], ['', 'CEP43', 'CEP43 (FOP)'], ['', 'DUSP16', 'DUSP16 (MKP-7, KIAA1700, M…']
];
document.getElementById('rows').innerHTML = rows.map(([c, a, b]) =>
  `<li class="row"><span class="pill ${c}">${a}</span><span>${b}</span><svg width="15" height="14" viewBox="0 0 15 14" fill="none" stroke="#6f828e" stroke-width="1.700"><path d="M0 7h13.500M8 1l6 6-6 6"/></svg></li>`).join('');

const bars = [333, 293, 239, 226, 226, 226, 213, 200, 200, 173, 173, 173, 160, 153, 153, 153, 146, 146, 146, 140];
document.getElementById('bars').innerHTML = bars.map(w => `<div class="bar" style="width:${w}px"></div>`).join('');
```
